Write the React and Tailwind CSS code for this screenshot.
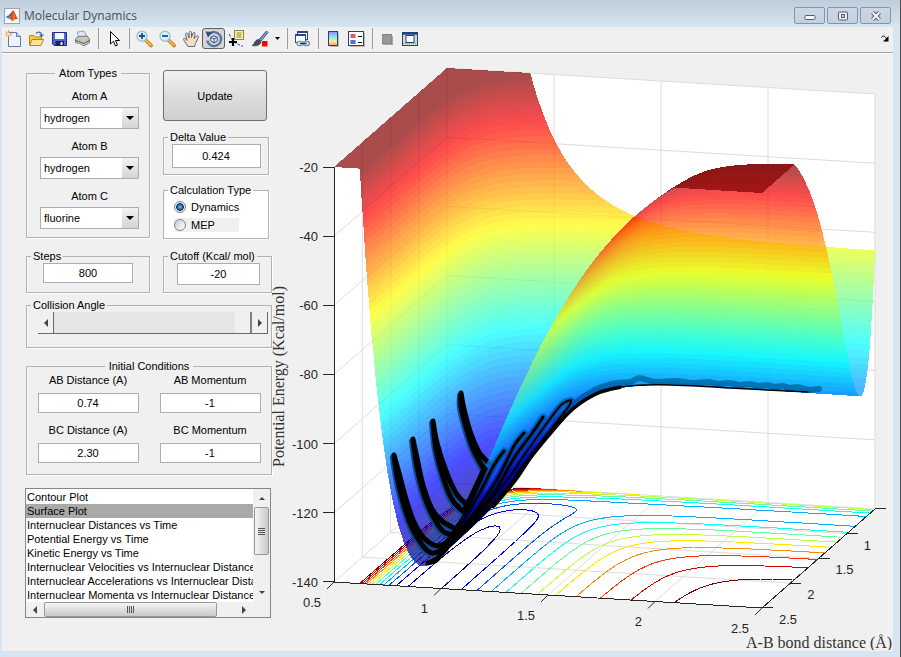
import React, { useId } from "react";

/* ---------- potential energy surface (London-Eyring-Polanyi-Sato) ---------- */

const HF = { d: 134, b: 2.2, r: 0.917 };
const HH = { d: 104, b: 1.975, r: 0.741 };
const DELTA = 0.424 * 0.424;
const CUTOFF = -20;

function terms(bond, r) {
  const u = Math.exp(-bond.b * (r - bond.r));
  return [
    (bond.d / 4) * ((3 + DELTA) * u * u - (2 + 6 * DELTA) * u),
    (bond.d / 4) * ((1 + 3 * DELTA) * u * u - (6 + 2 * DELTA) * u),
  ];
}

function energy(x, y) {
  const [q1, j1] = terms(HF, x);
  const [q2, j2] = terms(HH, y);
  const [q3, j3] = terms(HF, x + y);
  const root = Math.sqrt(
    j1 * j1 + j2 * j2 + j3 * j3 - j1 * j2 - j2 * j3 - j1 * j3
  );
  return (q1 + q2 + q3 - root) / (1 + DELTA);
}

const project = (x, y, z) => [
  447 + 214 * (x - 0.5) - 56.5 * (y - 0.5),
  69 + 13 * (x - 0.5) + 49.5 * (y - 0.5) + 3.458 * (CUTOFF - z),
];

const pt = (p) => p[0].toFixed(1) + " " + p[1].toFixed(1);

const clamp01 = (v) => Math.max(0, Math.min(1, v));
function jet(v) {
  const c = [3, 2, 1].map((k) =>
    Math.round(255 * clamp01(1.5 - Math.abs(4 * v - k)))
  );
  return `rgb(${c[0]},${c[1]},${c[2]})`;
}

const N = 80;
const STEP = 2 / N;
const BANDS = 64;

const grid = [];
let zMin = 0;
for (let i = 0; i <= N; i++) {
  grid.push([]);
  for (let j = 0; j <= N; j++) {
    const x = 0.5 + i * STEP;
    const y = 0.5 + j * STEP;
    const z = energy(x, y);
    zMin = Math.min(zMin, z);
    grid[i].push([x, y, z]);
  }
}
const range = CUTOFF - zMin;

function clip(poly, level, keepAbove) {
  const out = [];
  for (let i = 0; i < poly.length; i++) {
    const a = poly[i];
    const b = poly[(i + 1) % poly.length];
    const da = keepAbove ? a[2] - level : level - a[2];
    const db = keepAbove ? b[2] - level : level - b[2];
    if (da >= 0) out.push(a);
    if (da >= 0 !== db >= 0) {
      const t = da / (da - db);
      out.push([
        a[0] + t * (b[0] - a[0]),
        a[1] + t * (b[1] - a[1]),
        a[2] + t * (b[2] - a[2]),
      ]);
    }
  }
  return out;
}

function buildSurface() {
  const back = Array.from({ length: BANDS }, () => []);
  const front = Array.from({ length: BANDS }, () => []);
  const plateau = [];
  const band = (z) =>
    Math.max(0, Math.min(BANDS - 1, Math.floor(((z - zMin) / range) * BANDS)));
  const draw = (poly) => "M" + poly.map((p) => pt(project(...p))).join("L") + "Z";
  const add = (tri) => {
    const zs = tri.map((p) => p[2]);
    const lo = Math.min(...zs);
    const hi = Math.max(...zs);
    if (hi > CUTOFF) {
      const flat = clip(tri, CUTOFF, true).map((p) => [p[0], p[1], CUTOFF]);
      if (flat.length > 2) {
        if (tri[0][0] > 1.2 && tri[0][1] > 1.2) plateau.push(draw(flat));
        else back[BANDS - 1].push(draw(flat));
      }
      if (lo >= CUTOFF) return;
    }
    const [a, b, c] = tri.map((p) => project(...p));
    const area =
      (b[0] - a[0]) * (c[1] - a[1]) - (c[0] - a[0]) * (b[1] - a[1]);
    const sheet = area > 0 ? back : front;
    for (let k = band(lo); k <= band(hi); k++) {
      let poly = tri;
      if (k > 0) poly = clip(poly, zMin + (k * range) / BANDS, true);
      poly = clip(poly, zMin + ((k + 1) * range) / BANDS, false);
      if (poly.length > 2) sheet[k].push(draw(poly));
    }
  };
  for (let i = 0; i < N; i++)
    for (let j = 0; j < N; j++) {
      const a = grid[i][j];
      const b = grid[i + 1][j];
      const c = grid[i + 1][j + 1];
      const d = grid[i][j + 1];
      add([a, b, c]);
      add([a, c, d]);
    }
  return { back, front, plateau: plateau.join("") };
}

function buildContours() {
  const lines = [];
  for (let level = -130; level <= -20; level += 10) {
    const d = [];
    for (let i = 0; i < N; i++)
      for (let j = 0; j < N; j++) {
        const q = [grid[i][j], grid[i + 1][j], grid[i + 1][j + 1], grid[i][j + 1]];
        const cuts = [];
        for (let k = 0; k < 4; k++) {
          const a = q[k];
          const b = q[(k + 1) % 4];
          if (a[2] >= level !== b[2] >= level) {
            const t = (level - a[2]) / (b[2] - a[2]);
            cuts.push(
              project(a[0] + t * (b[0] - a[0]), a[1] + t * (b[1] - a[1]), -140)
            );
          }
        }
        if (cuts.length >= 2) d.push("M" + pt(cuts[0]) + "L" + pt(cuts[1]));
      }
    lines.push({ level, color: jet((level - zMin) / range), d: d.join("") });
  }
  return lines;
}

const surface = buildSurface();
const contours = buildContours();

/* ------------------------- trajectory strands ------------------------- */

function smooth(p) {
  let d = `M${p[0][0]} ${p[0][1]}`;
  for (let i = 0; i < p.length - 1; i++) {
    const a = p[i - 1] || p[i];
    const b = p[i];
    const c = p[i + 1];
    const e = p[i + 2] || c;
    d += `C${pt([b[0] + (c[0] - a[0]) / 6, b[1] + (c[1] - a[1]) / 6])} ${pt([
      c[0] - (e[0] - b[0]) / 6,
      c[1] - (e[1] - b[1]) / 6,
    ])} ${pt(c)}`;
  }
  return d;
}

/* Passes over the inner wall, turning points first. */
const innerPasses = [
  [[394, 456], [397, 477], [403, 503], [412, 529], [423, 547], [432, 554], [443, 551]],
  [[394, 456], [399, 474], [406, 500], [414, 523], [424, 539], [438, 547], [450, 541]],
  [[413, 440], [417, 459], [423, 486], [432, 510], [442, 522], [456, 530]],
  [[413, 440], [417, 468], [425, 499], [435, 521], [444, 533], [456, 536]],
  [[433, 422], [437, 444], [446, 472], [456, 494], [466, 505]],
  [[433, 422], [436, 450], [443, 478], [453, 502], [464, 513]],
  [[461, 394], [464, 410], [470, 432], [479, 453], [489, 464]],
  [[461, 394], [461, 407], [466, 428], [474, 452], [485, 472]],
].map(smooth).join("");

/* Passes over the outer wall, seen through the sheet in front. */
const outerPasses = [
  [[504, 452], [494, 466], [479, 495], [463, 522], [444, 549]],
  [[524, 434], [514, 447], [498, 479], [478, 509], [452, 541]],
  [[543, 418], [533, 433], [514, 459], [497, 489], [476, 516], [460, 534]],
  [[485, 470], [480, 481], [473, 496], [466, 510]],
].map(smooth).join("");

const outerLoop = [
  [[571, 401], [562, 405], [547, 424], [527, 452], [510, 477], [488, 505], [468, 527]],
  [[571, 401], [569, 407], [552, 429], [531, 456], [514, 481], [493, 506]],
].map(smooth).join("");

const lowerEdge = smooth([
  [430, 564], [437, 561], [447, 549], [460, 537], [485, 513], [510, 486],
  [520, 471], [547, 438], [566, 416], [580, 404], [600, 393], [620, 388],
]);

const approachEdge = smooth([
  [600, 393], [620, 388], [647, 386], [670, 386], [697, 387], [730, 389],
  [767, 391], [808, 393],
]);

const approachBand = smooth([
  [556, 422], [576, 403], [595, 391], [612, 385], [630, 383], [640, 379],
  [655, 383], [675, 382], [692, 384], [708, 383], [719, 385], [729, 384],
  [740, 386], [750, 385], [759, 387], [767, 386], [775, 388], [782, 387],
  [790, 389], [798, 388], [808, 391], [819, 390],
]);

/* -------------------------------- plot -------------------------------- */

const seg = (a, b) => "M" + pt(project(...a)) + "L" + pt(project(...b));
const inner = [1, 1.5, 2];
const levels = [-20, -40, -60, -80, -100, -120, -140];
const gridLines = [
  ...inner.map((v) => seg([v, 0.5, -20], [v, 0.5, -140])),
  ...inner.map((v) => seg([v, 0.5, -140], [v, 2.5, -140])),
  ...inner.map((v) => seg([0.5, v, -20], [0.5, v, -140])),
  ...inner.map((v) => seg([0.5, v, -140], [2.5, v, -140])),
  ...levels.map((z) => seg([0.5, 2.5, z], [0.5, 0.5, z])),
  ...levels.map((z) => seg([0.5, 0.5, z], [2.5, 0.5, z])),
  seg([0.5, 0.5, -20], [0.5, 0.5, -140]),
  seg([2.5, 0.5, -20], [2.5, 0.5, -140]),
].join("");

const ticks = [0.5, 1, 1.5, 2, 2.5];

function Sheet({ bands }) {
  return (
    <g shapeRendering="crispEdges" fillOpacity="0.7">
      {bands.map((d, k) =>
        d.length ? (
          <path key={k} d={d.join("")} fill={jet((k + 0.5) / BANDS)} />
        ) : null
      )}
    </g>
  );
}

function SurfacePlot() {
  return (
    <svg
      viewBox="272 54 621 597"
      className="block w-full"
      role="img"
      aria-label="Potential energy surface"
    >
      <path
        d="M334 583L334 168L447 69L875 95L875 510L762 609Z"
        fill="#fff"
      />
      <path d={gridLines} stroke="#dcdcdc" fill="none" />
      <g fill="none" strokeWidth="1" shapeRendering="crispEdges">
        {contours.map((c) => (
          <path key={c.level} d={c.d} stroke={c.color} />
        ))}
      </g>
      <Sheet bands={surface.back} />
      <g fill="none" strokeLinejoin="round" strokeLinecap="round">
        <path
          d={innerPasses}
          stroke="#0b4a94"
          strokeWidth="4"
          transform="translate(-2 2)"
        />
        <path d={innerPasses} stroke="#000" strokeWidth="5" />
        <path d={outerPasses} stroke="#000" strokeWidth="7" />
        <path d={outerLoop} stroke="#000" strokeWidth="6" />
        <path d={approachBand} stroke="#000" strokeWidth="6" />
        <path d={lowerEdge} stroke="#000" strokeWidth="4" />
      </g>
      <Sheet bands={surface.front} />
      <g fill="none" strokeLinejoin="round" strokeLinecap="round">
        <path d={outerPasses} stroke="#000" strokeWidth="3" />
        <path d={outerLoop} stroke="#000" strokeWidth="2" />
        <path d={lowerEdge} stroke="#000" strokeWidth="3" />
        <path d={approachEdge} stroke="#000" strokeWidth="1.500" />
        <path d="M428 564L437 560L446 550" stroke="#000" strokeWidth="5" />
        <path d="M485 470L473 496L464 513" stroke="#000" strokeWidth="5" />
      </g>
      <path
        d={surface.plateau}
        fill="#800000"
        fillOpacity="0.7"
        shapeRendering="crispEdges"
      />

      <g stroke="#262626" fill="none">
        <path d="M334 168V583L762 609L875 510" shapeRendering="crispEdges" />
        {levels.map((z) => {
          const p = project(0.5, 2.5, z);
          return (
            <path
              key={z}
              d={`M${p[0]} ${p[1]}h-11`}
              shapeRendering="crispEdges"
            />
          );
        })}
        {ticks.map((v) => {
          const p = project(v, 2.5, -140);
          return <path key={v} d={`M${p[0]} ${p[1]}l-7 7`} />;
        })}
        {ticks.map((v) => {
          const p = project(2.5, v, -140);
          return (
            <path
              key={v}
              d={`M${p[0]} ${p[1]}h11`}
              shapeRendering="crispEdges"
            />
          );
        })}
      </g>
      <g
        fill="#262626"
        fontSize="13"
        fontFamily="'Liberation Sans', Arial, sans-serif"
      >
        {levels.map((z) => (
          <text
            key={z}
            x="318"
            y={project(0.5, 2.5, z)[1] + 5}
            textAnchor="end"
          >
            {z}
          </text>
        ))}
        {ticks.map((v) => (
          <text
            key={v}
            x={project(v, 2.5, -140)[0] - 13}
            y={project(v, 2.5, -140)[1] + 25}
            textAnchor="end"
          >
            {v}
          </text>
        ))}
        {ticks.slice(1).map((v) => (
          <text
            key={v}
            x={project(2.5, v, -140)[0] + 17}
            y={project(2.5, v, -140)[1] + 16}
          >
            {v}
          </text>
        ))}
      </g>
      <g
        fill="#333"
        fontFamily="'Liberation Serif', 'Times New Roman', serif"
      >
        <text x="746" y="649" fontSize="16">
          A-B bond distance (Å)
        </text>
        <text transform="translate(284 468) rotate(-90)" fontSize="16">
          Potential Energy (Kcal/mol)
        </text>
      </g>
    </svg>
  );
}

/* ------------------------------- icons ------------------------------- */

function Icon({ children }) {
  return (
    <svg viewBox="0 0 18 18" className="size-[18px]" aria-hidden="true">
      {children}
    </svg>
  );
}

const NewIcon = () => (
  <Icon>
    <path d="M3.500 2.500H11.500L15.500 6.500V16.500H3.500Z" fill="#eef5fd" stroke="#5c7caf" />
    <path d="M11.500 2.500V6.500H15.500" fill="#b9d2f0" stroke="#5c7caf" />
    <path d="M1 1.500L6 6.500M6 1.500L1 6.500M3.500 0.500V7.500M0.500 4H7" stroke="#e0762c" />
    <circle cx="3.500" cy="4" r="1.500" fill="#fff3b0" />
  </Icon>
);
const OpenIcon = () => (
  <Icon>
    <path d="M1.500 14.500V5.500H6L7.500 7H13.500V14.500Z" fill="#f3c84b" stroke="#b8861b" />
    <path d="M1.500 15.500L4 9.500H15.500L13 15.500Z" fill="#fde58a" stroke="#b8861b" />
    <path d="M8 3.500C10 1.500 13 1.500 13.500 5" fill="none" stroke="#3f68b0" strokeWidth="1.300" />
    <path d="M11 4.500H16L13.500 7.500Z" fill="#3f68b0" />
  </Icon>
);
const SaveIcon = () => (
  <Icon>
    <path d="M1.500 2.500H15.500V15.500H3L1.500 14Z" fill="#5068d6" stroke="#232d86" />
    <rect x="4" y="3" width="9" height="6" fill="#f2f6ff" />
    <rect x="4.500" y="11" width="8.500" height="5" fill="#1b2358" />
    <rect x="9.500" y="12" width="2" height="3" fill="#e6eaff" />
  </Icon>
);
const PrintIcon = () => (
  <Icon>
    <path d="M4.500 8L3.500 2L10 1L13.500 7.500Z" fill="#dfeafb" stroke="#8aa2c8" />
    <path d="M1.500 9L4.500 6.500L13 6L15.500 9V12.500L10 16L1.500 12.500Z" fill="#c6c6c4" stroke="#757575" />
    <path d="M2 10.500L10 13.500L15 10.500" fill="none" stroke="#5a5a5a" />
    <path d="M4 13.500L9 15.800L9.500 17L3 14.500Z" fill="#eef3fb" />
    <circle cx="13.500" cy="8.500" r="0.900" fill="#e8c436" />
  </Icon>
);
const PointerIcon = () => (
  <Icon>
    <path d="M5.500 1.500V14L8.500 11.200L10.500 16L12.500 15L10.500 10.500H14.500Z" fill="#fff" stroke="#000" />
  </Icon>
);
const ZoomIcon = ({ plus }) => (
  <Icon>
    <path d="M10 10.500L15 15.500" stroke="#b9741c" strokeWidth="3.600" strokeLinecap="round" />
    <path d="M10 10.500L14.800 15.300" stroke="#f7b548" strokeWidth="2" strokeLinecap="round" />
    <circle cx="6" cy="6.200" r="5" fill="#d9f1fb" stroke="#9dc3e0" strokeWidth="1.400" />
    <path d={plus ? "M3 6H9M6 3V9" : "M3 6H9"} stroke="#1d4f86" strokeWidth="1.800" />
  </Icon>
);
const HandIcon = () => (
  <Icon>
    <path
      d="M6 16.500L2 10.500C0.500 8 3 7.500 4 9.500L5 10.500L3.500 4.500C3.500 2.500 5.500 2.500 6 4.500L7 8L7.200 2.500C7.500 0.800 9.500 1 9.500 2.500V7.500L11 3C11.800 1.600 13.400 2.400 13 4L12.200 8.500L14.500 6C16 5 17 6.500 16 8L13.500 13.500L12.500 16.500Z"
      fill="#fbdcbb"
      stroke="#4a5c8c"
      strokeWidth="0.900"
    />
  </Icon>
);
const RotateIcon = () => (
  <Icon>
    <path d="M4 4.200A7 7 0 1 1 2.200 10.500" fill="none" stroke="#5a74a0" strokeWidth="2.400" />
    <path d="M0.500 1.500L7.500 2L3 7.500Z" fill="#33507f" />
    <path d="M9 5.800L12.300 7.400V11L9 12.800L5.800 11V7.400ZM5.800 7.400L9 9L12.300 7.400M9 9V12.800" fill="#f4f6fa" stroke="#33507f" />
  </Icon>
);
const DataTipIcon = () => (
  <Icon>
    <rect x="6.500" y="0.500" width="9" height="9" fill="#f6f3a8" stroke="#8b8a3a" />
    <path d="M8.500 3H13.500M8.500 5H13.500M8.500 7H13.500" stroke="#8b8a3a" />
    <path d="M1 4C3 7 3 10 6 12S11 14.500 15 16.500" fill="none" stroke="#2a35c8" strokeDasharray="3 1.500" />
    <path d="M5 8V16M1 12H9" stroke="#000" strokeWidth="2.200" />
  </Icon>
);
const BrushIcon = () => (
  <Icon>
    <path d="M8 9.500L15.500 1L17 2.500L10 11Z" fill="#8b9ccb" stroke="#3a4a85" />
    <path d="M1 15.500C4 14.500 3 10 7.500 9.500L10 12C9.500 15 5 16.500 1 15.500Z" fill="#4c4c52" stroke="#2c2c32" strokeWidth="0.600" />
    <rect x="11" y="11" width="5.500" height="5.500" fill="#f00" />
  </Icon>
);
const LinkIcon = () => (
  <Icon>
    <rect x="3.500" y="1.500" width="10" height="8" fill="#fff" stroke="#2c4785" />
    <path d="M3 2H14" stroke="#2c4785" strokeWidth="2" />
    <rect x="1.500" y="4.500" width="10" height="8" fill="#fff" stroke="#2c4785" />
    <path d="M1 5H12" stroke="#2c4785" strokeWidth="2" />
    <rect x="3" y="11.500" width="6" height="4" rx="2" fill="#dce8f2" stroke="#7b95ad" strokeWidth="1.300" />
    <rect x="9.500" y="11.500" width="6" height="4" rx="2" fill="#dce8f2" stroke="#7b95ad" strokeWidth="1.300" />
    <path d="M6 13.500H12.500" stroke="#1e3345" strokeWidth="1.200" />
  </Icon>
);
const ColorbarIcon = () => (
  <Icon>
    <defs>
      <linearGradient id="colorbar" x1="0" y1="0" x2="0" y2="1">
        <stop offset="0" stopColor="#8d8cf0" />
        <stop offset="0.400" stopColor="#8fe6f2" />
        <stop offset="0.700" stopColor="#f6ee9c" />
        <stop offset="1" stopColor="#f39a86" />
      </linearGradient>
    </defs>
    <path d="M5 16.500H13.500V3" fill="none" stroke="#b9b9b9" />
    <rect x="3.500" y="1.500" width="9" height="14" fill="url(#colorbar)" stroke="#22407f" />
  </Icon>
);
const LegendIcon = () => (
  <Icon>
    <path d="M2 16.500H16.500V3" fill="none" stroke="#b9b9b9" />
    <rect x="0.500" y="1.500" width="15" height="14" fill="#fff" stroke="#22407f" />
    <rect x="2.500" y="4" width="5" height="4" fill="#e55a5a" />
    <rect x="2.500" y="10" width="5" height="4" fill="#5a63e5" />
    <path d="M10 6.500H14M10 12.500H14" stroke="#000" />
  </Icon>
);
const HideToolsIcon = () => (
  <Icon>
    <rect x="4" y="6" width="10" height="9" fill="#a8a8a8" />
    <rect x="3.500" y="4.500" width="9" height="9" fill="#979797" stroke="#868686" />
  </Icon>
);
const ShowToolsIcon = () => (
  <Icon>
    <rect x="0.500" y="2.500" width="15" height="13" fill="#d5d8cc" stroke="#22407f" />
    <path d="M0 3.500H16" stroke="#22407f" strokeWidth="2.500" />
    <rect x="4" y="5.500" width="8" height="7" fill="#fff" stroke="#22407f" />
    <path d="M1 13.500H15" stroke="#8c9a9a" strokeDasharray="1 1" />
  </Icon>
);

function Tool({ label, active, children }) {
  return (
    <span className="flex h-6 w-[23px] items-center justify-center">
      <button
        aria-label={label}
        className={
          active
            ? "flex h-[21px] w-[23px] items-center justify-center rounded-[3px] border border-[#5f5f5f] bg-[#d6d6d6]"
            : "flex items-center justify-center"
        }
      >
        {children}
      </button>
    </span>
  );
}

const Separator = () => (
  <span className="flex w-2 justify-center">
    <span className="h-[21px] w-px bg-[#9c9c9c]" />
  </span>
);

/* ------------------------------ controls ------------------------------ */

function Group({ title, centered, className = "", children }) {
  return (
    <fieldset
      className={`min-w-0 border border-[#b2b2b2] shadow-[1px_1px_0_#fff,inset_1px_0_0_#fafafa] ${className}`}
    >
      <legend
        className={`h-[14px] leading-[14px] ${centered ? "mx-auto px-1" : "ml-1 px-0.5"}`}
      >
        {title}
      </legend>
      {children}
    </fieldset>
  );
}

function AtomSelect({ label, value }) {
  const id = useId();
  return (
    <div className="flex flex-col items-center gap-1">
      <label htmlFor={id} className="leading-[14px]">
        {label}
      </label>
      <div className="relative w-[99px]">
        <select
          id={id}
          defaultValue={value}
          className="block h-[22px] w-full appearance-none rounded-none border border-[#abadb3] bg-white pl-[3px]"
        >
          <option>hydrogen</option>
          <option>fluorine</option>
        </select>
        <span className="pointer-events-none absolute top-px right-px flex h-5 w-4 items-center justify-center bg-linear-to-b from-[#f3f3f3] to-[#d4d4d4]">
          <svg viewBox="0 0 8 4" className="h-1 w-2" aria-hidden="true">
            <path d="M0 0H8L4 4Z" />
          </svg>
        </span>
      </div>
    </div>
  );
}

function Field({ label, value, className = "" }) {
  return (
    <input
      aria-label={label}
      defaultValue={value}
      className={`block border border-[#abadb3] bg-white text-center ${className}`}
    />
  );
}

function LabelledField({ label, value }) {
  const id = useId();
  return (
    <div className="flex flex-col items-center gap-[6px]">
      <label htmlFor={id} className="leading-[14px]">
        {label}
      </label>
      <input
        id={id}
        defaultValue={value}
        className="block h-5 w-[101px] border border-[#abadb3] bg-white text-center"
      />
    </div>
  );
}

function Arrow({ dir }) {
  const d = {
    left: "M6 0V8L2 4Z",
    right: "M2 0V8L6 4Z",
    up: "M1 6H7L4 3Z",
    down: "M1 2H7L4 5Z",
  }[dir];
  return (
    <svg viewBox="0 0 8 8" className="size-2" aria-hidden="true">
      <path d={d} fill="#444" />
    </svg>
  );
}

const plots = [
  "Contour Plot",
  "Surface Plot",
  "Internuclear Distances vs Time",
  "Potential Energy vs Time",
  "Kinetic Energy vs Time",
  "Internuclear Velocities vs Internuclear Distance",
  "Internuclear Accelerations vs Internuclear Distance",
  "Internuclear Momenta vs Internuclear Distance",
];

function PlotList() {
  return (
    <div className="border border-[#828790] bg-white">
      <div className="flex">
        <ul
          role="listbox"
          aria-label="Plot type"
          className="min-w-0 flex-1 overflow-hidden pt-px"
        >
          {plots.map((name) => (
            <li
              key={name}
              role="option"
              aria-selected={name === "Surface Plot"}
              className={`h-[14px] pl-px leading-[14px] whitespace-nowrap ${
                name === "Surface Plot" ? "bg-[#a9a9a9]" : ""
              }`}
            >
              {name}
            </li>
          ))}
        </ul>
        <div className="flex w-[17px] flex-col items-center bg-[#f0f0f0]">
          <button aria-label="Scroll up" className="flex h-[18px] items-center">
            <Arrow dir="up" />
          </button>
          <div className="flex h-12 w-[15px] flex-col items-center justify-center gap-px rounded-[2px] border border-[#979797] bg-linear-to-r from-[#f5f5f5] to-[#c9c9cb]">
            <span className="h-px w-[7px] bg-[#555]" />
            <span className="h-px w-[7px] bg-[#555]" />
            <span className="h-px w-[7px] bg-[#555]" />
            <span className="h-px w-[7px] bg-[#555]" />
          </div>
          <button
            aria-label="Scroll down"
            className="mt-auto flex h-[18px] items-center"
          >
            <Arrow dir="down" />
          </button>
        </div>
      </div>
      <div className="flex h-[15px] items-center bg-[#f0f0f0] pr-[17px]">
        <button
          aria-label="Scroll left"
          className="flex w-[18px] justify-center"
        >
          <Arrow dir="left" />
        </button>
        <div className="flex h-[15px] w-[173px] items-center justify-center gap-px rounded-[2px] border border-[#979797] bg-linear-to-b from-[#f5f5f5] to-[#c9c9cb]">
          <span className="h-[7px] w-px bg-[#555]" />
          <span className="h-[7px] w-px bg-[#555]" />
          <span className="h-[7px] w-px bg-[#555]" />
          <span className="h-[7px] w-px bg-[#555]" />
        </div>
        <button
          aria-label="Scroll right"
          className="ml-auto flex w-[18px] justify-center"
        >
          <Arrow dir="right" />
        </button>
      </div>
    </div>
  );
}

function ControlPanel() {
  return (
    <div className="flex w-[270px] shrink-0 flex-col pt-[13px] pl-6">
      <div className="flex items-start gap-[13px]">
        <Group title="Atom Types" centered className="w-[124px]">
          <div className="flex flex-col gap-[10px] pt-[9px] pb-2 pl-[3px]">
            <AtomSelect label="Atom A" value="hydrogen" />
            <AtomSelect label="Atom B" value="hydrogen" />
            <AtomSelect label="Atom C" value="fluorine" />
          </div>
        </Group>
        <div className="flex flex-1 flex-col pt-1 pr-[3px]">
          <button className="mr-[2px] h-[51px] rounded-[3px] border border-[#707070] bg-linear-to-b from-[#f2f2f2] from-0% via-[#dddddd] via-50% to-[#cfcfcf] pt-px">
            Update
          </button>
          <Group title="Delta Value" className="mt-[9px]">
            <Field
              label="Delta Value"
              value="0.424"
              className="mx-auto mb-[6px] h-6 w-[89px]"
            />
          </Group>
          <Group title="Calculation Type" className="mt-2 bg-white">
            <div className="flex flex-col items-start gap-1 pt-[3px] pb-[6px] pl-[10px]">
              <Radio label="Dynamics" on />
              <Radio label="MEP" />
            </div>
          </Group>
        </div>
      </div>

      <div className="mt-[10px] flex items-start gap-[13px]">
        <Group title="Steps" className="w-[124px]">
          <Field
            label="Steps"
            value="800"
            className="mb-[9px] ml-[16px] h-5 w-[90px]"
          />
        </Group>
        <Group title="Cutoff (Kcal/ mol)" className="flex-1">
          <Field
            label="Cutoff"
            value="-20"
            className="mb-[7px] ml-[13px] h-[22px] w-[83px]"
          />
        </Group>
      </div>

      <Group title="Collision Angle" className="mt-[5px]">
        <div className="mr-[3px] mb-[13px] ml-[11px] flex h-[22px] border-b border-[#696969]">
          <button
            aria-label="Decrease angle"
            className="flex w-4 items-center justify-center border-r border-[#696969]"
          >
            <Arrow dir="left" />
          </button>
          <input
            type="range"
            aria-label="Collision Angle"
            min="0"
            max="180"
            defaultValue="180"
            className="h-full min-w-0 flex-1 appearance-none bg-[#e5e5e5] [&::-webkit-slider-thumb]:h-[21px] [&::-webkit-slider-thumb]:w-[17px] [&::-webkit-slider-thumb]:appearance-none [&::-webkit-slider-thumb]:border-r-2 [&::-webkit-slider-thumb]:border-[#808080] [&::-webkit-slider-thumb]:bg-[#f0f0f0]"
          />
          <button
            aria-label="Increase angle"
            className="flex w-4 items-center justify-center border-r border-[#696969]"
          >
            <Arrow dir="right" />
          </button>
        </div>
      </Group>

      <Group title="Initial Conditions" centered className="mt-[11px]">
        <div className="grid grid-cols-2 gap-y-[10px] pb-[11px]">
          <LabelledField label="AB Distance (A)" value="0.74" />
          <LabelledField label="AB Momentum" value="-1" />
          <LabelledField label="BC Distance (A)" value="2.30" />
          <LabelledField label="BC Momentum" value="-1" />
        </div>
      </Group>

      <div className="mt-[13px] mr-px -ml-px">
        <PlotList />
      </div>
    </div>
  );
}

function Radio({ label, on }) {
  return (
    <label
      className={`flex h-[14px] items-center gap-[5px] ${on ? "" : "w-[65px] bg-[#f0f0f0]"}`}
    >
      <input
        type="radio"
        name="calculation"
        defaultChecked={on}
        className="size-3 appearance-none rounded-full border border-[#7f8287] bg-linear-to-br from-[#c9ccd0] to-white checked:bg-[radial-gradient(circle,#7fd0f0_0,#1a5488_38%,#123a66_50%,#e8eef2_58%)]"
      />
      {label}
    </label>
  );
}

function WindowButton({ label, children }) {
  return (
    <button
      aria-label={label}
      className="flex h-[17px] w-[31px] items-center justify-center rounded-[2px] border border-[#8494b0] bg-linear-to-b from-[#cdd8e4] to-[#c3d0de]"
    >
      <svg viewBox="0 0 14 12" className="h-3 w-[14px]" aria-hidden="true">
        {children}
      </svg>
    </button>
  );
}

export default function App() {
  return (
    <div className="flex min-h-screen flex-col border-r border-[#4a4f55] bg-[#d7e4f1] pr-[7px] pb-[6px] pl-[2px] font-['Liberation_Sans',Arial,sans-serif] text-[11px] text-black">
      <header className="-mr-[7px] -ml-[2px] flex h-[27px] items-center bg-linear-to-b from-[#bfccd9] to-[#d7e4f1] pt-1 pr-[9px] pl-1">
        <svg viewBox="0 0 16 16" className="size-4" aria-hidden="true">
          <rect x="0.500" y="0.500" width="15" height="15" fill="#f6f8fa" stroke="#98a4b3" />
          <path d="M1.500 9L5 7L7 8.500L4.500 10.500Z" fill="#3b7fb5" />
          <path d="M5 7C7 6 8 2.500 9.500 2.500L7 8.500Z" fill="#5b3a4a" />
          <path d="M9.500 2.500C11 4 12.500 9.500 14.500 11.500C12 10.500 10.500 11 8.500 13.500C7.500 12 6.500 11 4.500 10.500C7.500 9.500 8 4 9.500 2.500Z" fill="#d9541e" />
          <path d="M9.500 2.500C10 5 10 9 8.500 13.500C10.500 11 11 8 9.500 2.500Z" fill="#f6a04a" />
        </svg>
        <h1 className="ml-1 font-['Open_Sans','Noto_Sans',sans-serif] text-[12px] text-[#45525f]">
          Molecular Dynamics
        </h1>
        <div className="ml-auto flex gap-[2px]">
          <WindowButton label="Minimize">
            <rect x="2" y="5.500" width="10" height="4" rx="1" fill="#fbfcfd" stroke="#555c6e" />
          </WindowButton>
          <WindowButton label="Maximize">
            <rect x="2.500" y="2" width="9" height="8" rx="1" fill="#eef1f4" stroke="#555c6e" />
            <rect x="5.500" y="4.500" width="3" height="3" fill="#c6d2df" stroke="#555c6e" />
          </WindowButton>
          <WindowButton label="Close">
            <path d="M3.500 2.500L10.500 9.500M10.500 2.500L3.500 9.500" stroke="#555c6e" strokeWidth="4" />
            <path d="M3.500 2.500L10.500 9.500M10.500 2.500L3.500 9.500" stroke="#f7f8fa" strokeWidth="2" />
          </WindowButton>
        </div>
      </header>

      <main className="flex-1 bg-[#f0f0f0]">
        <div className="flex h-[26px] items-center border-b border-[#a0a0a0] pb-[2px] shadow-[0_1px_0_#fff]">
          <Tool label="New figure"><NewIcon /></Tool>
          <Tool label="Open file"><OpenIcon /></Tool>
          <Tool label="Save figure"><SaveIcon /></Tool>
          <Tool label="Print figure"><PrintIcon /></Tool>
          <Separator />
          <Tool label="Edit plot"><PointerIcon /></Tool>
          <Separator />
          <Tool label="Zoom in"><ZoomIcon plus /></Tool>
          <Tool label="Zoom out"><ZoomIcon /></Tool>
          <Tool label="Pan"><HandIcon /></Tool>
          <Tool label="Rotate 3D" active><RotateIcon /></Tool>
          <Tool label="Data cursor"><DataTipIcon /></Tool>
          <Tool label="Brush data"><BrushIcon /></Tool>
          <button aria-label="Brush colors" className="flex w-3 justify-center">
            <svg viewBox="0 0 5 3" className="h-[3px] w-[5px]" aria-hidden="true">
              <path d="M0 0H5L2.500 3Z" />
            </svg>
          </button>
          <Separator />
          <Tool label="Link plot"><LinkIcon /></Tool>
          <Separator />
          <Tool label="Insert colorbar"><ColorbarIcon /></Tool>
          <Tool label="Insert legend"><LegendIcon /></Tool>
          <Separator />
          <Tool label="Hide plot tools"><HideToolsIcon /></Tool>
          <Tool label="Show plot tools"><ShowToolsIcon /></Tool>
          <button aria-label="Dock figure" className="mr-1 ml-auto">
            <svg viewBox="0 0 8 7" className="h-[7px] w-2" aria-hidden="true">
              <path d="M0.500 2.500C1.500 0.500 3.500 0.500 5 3" fill="none" stroke="#000" />
              <path d="M7.500 1V6.500H2Z" />
            </svg>
          </button>
        </div>
        <div className="flex items-start">
          <ControlPanel />
          <div className="min-w-0 flex-1">
            <SurfacePlot />
          </div>
        </div>
      </main>
    </div>
  );
}
